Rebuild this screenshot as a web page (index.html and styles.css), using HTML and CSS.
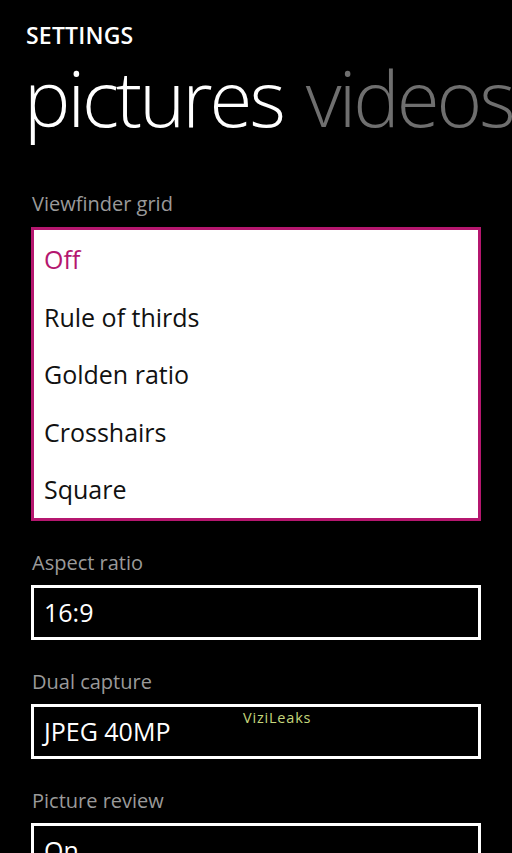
FILE: index.html
```html
<!DOCTYPE html>
<html lang="en">
<head>
  <meta charset="UTF-8" />
  <meta name="viewport" content="width=device-width, initial-scale=1" />
  <title>Settings - pictures</title>
  <link rel="stylesheet" href="styles.css">
</head>
<body>
  <div class="page">
    <header class="app-header">
      <div class="app-title">SETTINGS</div>
      <nav class="pivot">
        <span class="pivot-item active">pictures</span>
        <span class="pivot-item">videos</span>
      </nav>
    </header>

    <main class="settings">
      <section class="setting">
        <div class="setting-label">Viewfinder grid</div>
        <ul class="listbox open">
          <li class="selected">Off</li>
          <li>Rule of thirds</li>
          <li>Golden ratio</li>
          <li>Crosshairs</li>
          <li>Square</li>
        </ul>
      </section>

      <section class="setting">
        <div class="setting-label">Aspect ratio</div>
        <div class="listbox">16:9</div>
      </section>

      <section class="setting">
        <div class="setting-label">Dual capture</div>
        <div class="listbox">JPEG 40MP</div>
        <span class="watermark">ViziLeaks</span>
      </section>

      <section class="setting">
        <div class="setting-label">Picture review</div>
        <div class="listbox">On</div>
      </section>
    </main>
  </div>
</body>
</html>
```

FILE: styles.css
```css
:root {
  --color-bg: #000000;
  --color-text: #ffffff;
  --color-dim: #9a9a9a;
  --color-pivot-off: #6f6f6f;
  --color-accent: #b5176f;
  --font-main: "Open Sans", "Noto Sans", sans-serif;
}

* {
  box-sizing: border-box;
}

html,
body {
  margin: 0;
  height: 100%;
}

body {
  background: var(--color-bg);
  color: var(--color-text);
  font-family: var(--font-main);
  overflow: hidden;
}

.page {
  width: 512px;
  height: 853px;
  overflow: hidden;
}

/* header + pivot */
.app-header {
  padding: 20px 0 0 26px;
}

.app-title {
  font-size: 23px;
  font-weight: 600;
  line-height: 30px;
  letter-spacing: 0.2px;
}

.pivot {
  display: flex;
  gap: 23px;
  white-space: nowrap;
  margin-top: 8px;
  margin-left: -2px;
}

.pivot-item {
  font-size: 78px;
  font-weight: 300;
  line-height: 78px;
  letter-spacing: -3px;
  color: var(--color-pivot-off);
}

.pivot-item.active {
  color: var(--color-text);
}

/* settings list */
.settings {
  padding: 0 31px;
}

.setting {
  position: relative;
  margin-top: 30px;
}

.setting:first-child {
  margin-top: 56px;
}

.setting-label {
  font-size: 20px;
  line-height: 24px;
  color: var(--color-dim);
  padding-left: 1px;
  margin-bottom: 10px;
}

.setting:first-child .setting-label {
  margin-bottom: 11px;
}

.listbox {
  margin: 0;
  padding: 0 10px;
  list-style: none;
  border: 3px solid var(--color-text);
  font-size: 25px;
  line-height: 48px;
  height: 55px;
}

.listbox.open {
  height: auto;
  background: #ffffff;
  border-color: var(--color-accent);
  color: #111111;
}

.listbox.open li {
  height: 57.5px;
  line-height: 59px;
}

.listbox.open li.selected {
  color: var(--color-accent);
}

.watermark {
  position: absolute;
  left: 212px;
  top: 38px;
  font-size: 14.5px;
  letter-spacing: 0.8px;
  color: #c5d77c;
}
```
